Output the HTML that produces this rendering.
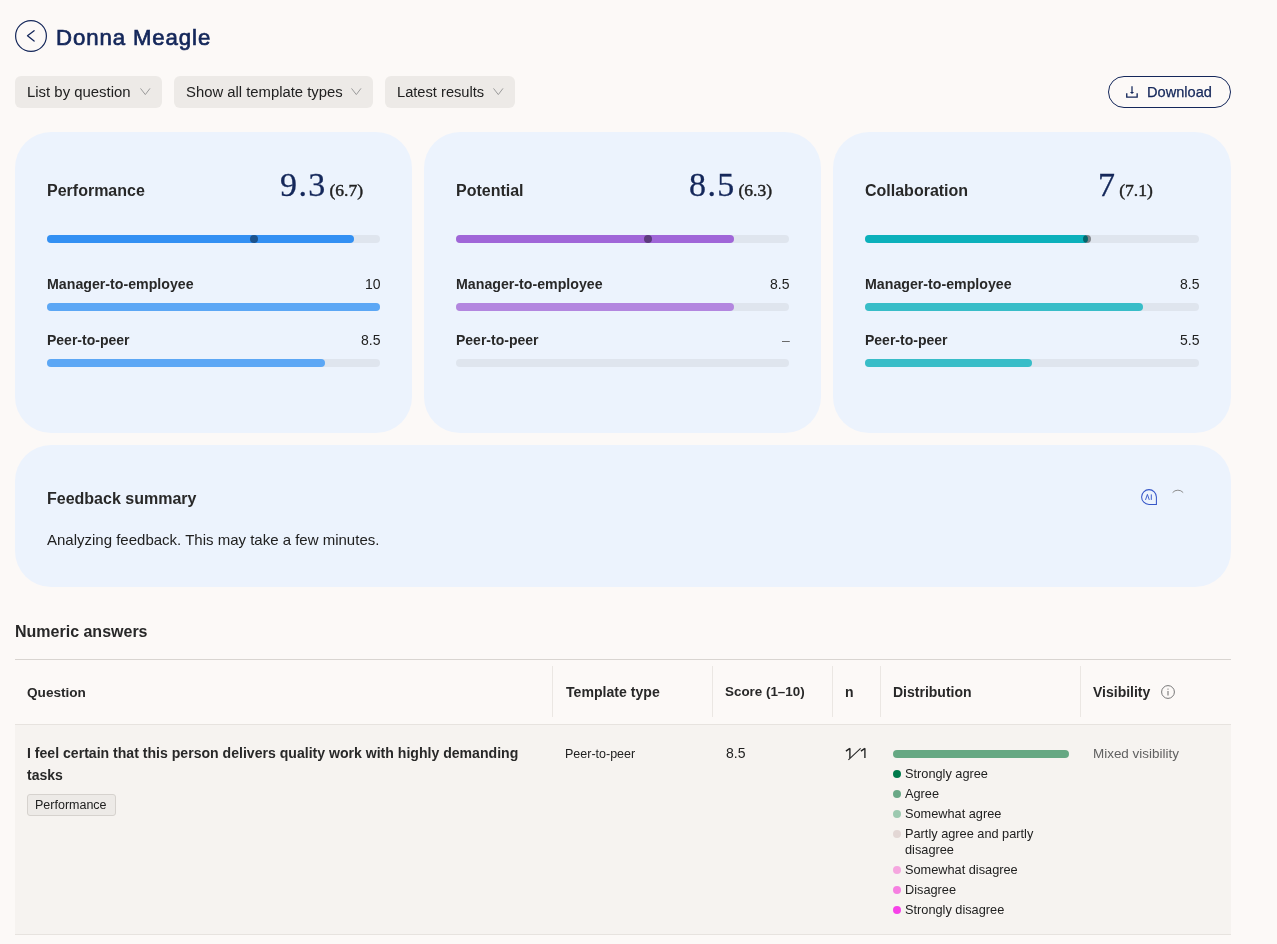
<!DOCTYPE html>
<html><head><meta charset="utf-8"><title>Donna Meagle</title>
<style>
html,body{margin:0;padding:0;}
body{width:1277px;height:944px;background:#fcf9f7;position:relative;overflow:hidden;font-family:'Liberation Sans', sans-serif;}
.t{position:absolute;white-space:nowrap;will-change:transform;}
.r{position:absolute;}
</style></head><body>
<svg class="r" style="left:15px;top:20px" width="32" height="32" viewBox="0 0 32 32"><circle cx="16" cy="16" r="15.4" fill="none" stroke="#14275a" stroke-width="1.2"/><path d="M19.1 10.7 L12.5 15.8 L19.1 21" fill="none" stroke="#14275a" stroke-width="1.3" stroke-linecap="round" stroke-linejoin="round"/></svg>
<div class="t" style="left:55.8px;top:23.83px;font-size:22.2px;line-height:27.75px;font-weight:400;color:#14275a;font-family:'Liberation Sans', sans-serif;-webkit-text-stroke:0.7px #14275a;letter-spacing:0.9px;">Donna Meagle</div>
<div class="r" style="left:15px;top:76px;width:147px;height:32px;background:#edeae7;border-radius:6px;"></div>
<div class="t" style="left:27px;top:83.11px;font-size:14.92px;line-height:18.65px;font-weight:400;color:#212121;font-family:'Liberation Sans', sans-serif;">List by question</div>
<svg class="r" style="left:139.5px;top:88px" width="11" height="8" viewBox="0 0 11 8"><path d="M0.5 0.4 L5.3 6.6 L10 0.4" fill="none" stroke="#9a9a9a" stroke-width="1"/></svg>
<div class="r" style="left:174px;top:76px;width:199px;height:32px;background:#edeae7;border-radius:6px;"></div>
<div class="t" style="left:186px;top:83.18px;font-size:14.84px;line-height:18.55px;font-weight:400;color:#212121;font-family:'Liberation Sans', sans-serif;">Show all template types</div>
<svg class="r" style="left:350.7px;top:88px" width="11" height="8" viewBox="0 0 11 8"><path d="M0.5 0.4 L5.3 6.6 L10 0.4" fill="none" stroke="#9a9a9a" stroke-width="1"/></svg>
<div class="r" style="left:385px;top:76px;width:130px;height:32px;background:#edeae7;border-radius:6px;"></div>
<div class="t" style="left:397px;top:83.36px;font-size:14.66px;line-height:18.32px;font-weight:400;color:#212121;font-family:'Liberation Sans', sans-serif;">Latest results</div>
<svg class="r" style="left:492.5px;top:88px" width="11" height="8" viewBox="0 0 11 8"><path d="M0.5 0.4 L5.3 6.6 L10 0.4" fill="none" stroke="#9a9a9a" stroke-width="1"/></svg>
<div class="r" style="left:1108px;top:76px;width:123px;height:32px;background:transparent;border-radius:16px;box-sizing:border-box;border:1.5px solid #14275a;"></div>
<svg class="r" style="left:1125px;top:86px" width="14" height="13" viewBox="0 0 14 13"><path d="M7 0.2 V6.6" fill="none" stroke="#14275a" stroke-width="1.25"/><path d="M4.9 6.1 H9.1 L7 8.1 Z" fill="#14275a"/><path d="M1.75 7.3 V11.15 H12.15 V7.3" fill="none" stroke="#14275a" stroke-width="1.35"/></svg>
<div class="t" style="left:1147.3px;top:82.82px;font-size:14.6px;line-height:18.25px;font-weight:400;color:#14275a;font-family:'Liberation Sans', sans-serif;-webkit-text-stroke:0.25px #14275a;">Download</div>
<div class="r" style="left:15px;top:132px;width:397.33px;height:301px;background:#ecf3fd;border-radius:36px;"></div>
<div class="t" style="left:47px;top:180.86px;font-size:16px;line-height:20.00px;font-weight:700;color:#282828;font-family:'Liberation Sans', sans-serif;">Performance</div>
<div class="t" style="left:279.60px;top:163.77px;line-height:42.50px;white-space:nowrap"><span style="font-family:'Liberation Serif', serif;font-size:34px;color:#14275a;-webkit-text-stroke:0.3px #14275a;letter-spacing:1.4px">9.3</span><span style="font-family:'Liberation Serif', serif;font-size:17.5px;font-weight:400;-webkit-text-stroke:0.45px #212121;color:#212121;margin-left:2.8px">(6.7)</span></div>
<div class="r" style="left:47px;top:235px;width:333.33px;height:8px;background:#dfe5ee;border-radius:4px;"></div>
<div class="r" style="left:47px;top:235px;width:307.33px;height:8px;background:#3390f3;border-radius:4px;"></div>
<div class="r" style="left:250.0px;top:235px;width:8px;height:8px;background:rgba(0,0,0,0.42);border-radius:4px;"></div>
<div class="t" style="left:47px;top:275.60px;font-size:14.2px;line-height:17.75px;font-weight:700;color:#282828;font-family:'Liberation Sans', sans-serif;">Manager-to-employee</div>
<div class="t" style="right:896.6700000000001px;top:275.80px;font-size:14px;line-height:17.50px;font-weight:400;color:#212121;font-family:'Liberation Sans', sans-serif;">10</div>
<div class="r" style="left:47px;top:303px;width:333.33px;height:8px;background:#dfe5ee;border-radius:4px;"></div>
<div class="r" style="left:47px;top:303px;width:333.33px;height:8px;background:#5ca7f5;border-radius:4px;"></div>
<div class="t" style="left:47px;top:332.30px;font-size:14px;line-height:17.50px;font-weight:700;color:#282828;font-family:'Liberation Sans', sans-serif;">Peer-to-peer</div>
<div class="t" style="right:896.6700000000001px;top:332.30px;font-size:14px;line-height:17.50px;font-weight:400;color:#212121;font-family:'Liberation Sans', sans-serif;">8.5</div>
<div class="r" style="left:47px;top:359px;width:333.33px;height:8px;background:#dfe5ee;border-radius:4px;"></div>
<div class="r" style="left:47px;top:359px;width:277.76px;height:8px;background:#5ca7f5;border-radius:4px;"></div>
<div class="r" style="left:424.33px;top:132px;width:397px;height:301px;background:#ecf3fd;border-radius:36px;"></div>
<div class="t" style="left:456.33px;top:180.86px;font-size:16px;line-height:20.00px;font-weight:700;color:#282828;font-family:'Liberation Sans', sans-serif;">Potential</div>
<div class="t" style="left:688.93px;top:163.77px;line-height:42.50px;white-space:nowrap"><span style="font-family:'Liberation Serif', serif;font-size:34px;color:#14275a;-webkit-text-stroke:0.3px #14275a;letter-spacing:1.4px">8.5</span><span style="font-family:'Liberation Serif', serif;font-size:17.5px;font-weight:400;-webkit-text-stroke:0.45px #212121;color:#212121;margin-left:2.8px">(6.3)</span></div>
<div class="r" style="left:456.33px;top:235px;width:333px;height:8px;background:#dfe5ee;border-radius:4px;"></div>
<div class="r" style="left:456.33px;top:235px;width:277.49px;height:8px;background:#a066d8;border-radius:4px;"></div>
<div class="r" style="left:644.43px;top:235px;width:8px;height:8px;background:rgba(0,0,0,0.42);border-radius:4px;"></div>
<div class="t" style="left:456.33px;top:275.60px;font-size:14.2px;line-height:17.75px;font-weight:700;color:#282828;font-family:'Liberation Sans', sans-serif;">Manager-to-employee</div>
<div class="t" style="right:487.66999999999996px;top:275.80px;font-size:14px;line-height:17.50px;font-weight:400;color:#212121;font-family:'Liberation Sans', sans-serif;">8.5</div>
<div class="r" style="left:456.33px;top:303px;width:333px;height:8px;background:#dfe5ee;border-radius:4px;"></div>
<div class="r" style="left:456.33px;top:303px;width:277.49px;height:8px;background:#b386df;border-radius:4px;"></div>
<div class="t" style="left:456.33px;top:332.30px;font-size:14px;line-height:17.50px;font-weight:700;color:#282828;font-family:'Liberation Sans', sans-serif;">Peer-to-peer</div>
<div class="t" style="right:487.66999999999996px;top:332.30px;font-size:14px;line-height:17.50px;font-weight:400;color:#6a6a6a;font-family:'Liberation Sans', sans-serif;">–</div>
<div class="r" style="left:456.33px;top:359px;width:333px;height:8px;background:#dfe5ee;border-radius:4px;"></div>
<div class="r" style="left:833px;top:132px;width:398px;height:301px;background:#ecf3fd;border-radius:36px;"></div>
<div class="t" style="left:865px;top:180.86px;font-size:16px;line-height:20.00px;font-weight:700;color:#282828;font-family:'Liberation Sans', sans-serif;">Collaboration</div>
<div class="t" style="left:1097.60px;top:163.77px;line-height:42.50px;white-space:nowrap"><span style="font-family:'Liberation Serif', serif;font-size:34px;color:#14275a;-webkit-text-stroke:0.3px #14275a;letter-spacing:1.4px">7</span><span style="font-family:'Liberation Serif', serif;font-size:17.5px;font-weight:400;-webkit-text-stroke:0.45px #212121;color:#212121;margin-left:2.8px">(7.1)</span></div>
<div class="r" style="left:865px;top:235px;width:334px;height:8px;background:#dfe5ee;border-radius:4px;"></div>
<div class="r" style="left:865px;top:235px;width:222.68px;height:8px;background:#0bb0bb;border-radius:4px;"></div>
<div class="r" style="left:1083.39px;top:235px;width:8px;height:8px;background:rgba(0,0,0,0.42);border-radius:4px;"></div>
<div class="t" style="left:865px;top:275.60px;font-size:14.2px;line-height:17.75px;font-weight:700;color:#282828;font-family:'Liberation Sans', sans-serif;">Manager-to-employee</div>
<div class="t" style="right:78px;top:275.80px;font-size:14px;line-height:17.50px;font-weight:400;color:#212121;font-family:'Liberation Sans', sans-serif;">8.5</div>
<div class="r" style="left:865px;top:303px;width:334px;height:8px;background:#dfe5ee;border-radius:4px;"></div>
<div class="r" style="left:865px;top:303px;width:278.32px;height:8px;background:#38bdc8;border-radius:4px;"></div>
<div class="t" style="left:865px;top:332.30px;font-size:14px;line-height:17.50px;font-weight:700;color:#282828;font-family:'Liberation Sans', sans-serif;">Peer-to-peer</div>
<div class="t" style="right:78px;top:332.30px;font-size:14px;line-height:17.50px;font-weight:400;color:#212121;font-family:'Liberation Sans', sans-serif;">5.5</div>
<div class="r" style="left:865px;top:359px;width:334px;height:8px;background:#dfe5ee;border-radius:4px;"></div>
<div class="r" style="left:865px;top:359px;width:167.0px;height:8px;background:#38bdc8;border-radius:4px;"></div>
<div class="r" style="left:15px;top:445px;width:1216px;height:142px;background:#ecf3fd;border-radius:36px;"></div>
<div class="t" style="left:46.6px;top:488.56px;font-size:16px;line-height:20.00px;font-weight:700;color:#282828;font-family:'Liberation Sans', sans-serif;">Feedback summary</div>
<div class="t" style="left:46.5px;top:530.83px;font-size:15px;line-height:18.75px;font-weight:400;color:#212121;font-family:'Liberation Sans', sans-serif;">Analyzing feedback. This may take a few minutes.</div>
<svg class="r" style="left:1141px;top:489px" width="16" height="16" viewBox="0 0 16 16"><path d="M15.4 15.4 H8 A7.4 7.4 0 1 1 15.4 8 Z" fill="none" stroke="#3656c8" stroke-width="1.05"/><path d="M4.5 10.9 L6.4 5.4 L8.3 10.9 M10.3 5.4 V10.9" fill="none" stroke="#3656c8" stroke-width="0.95"/></svg>
<svg class="r" style="left:1170px;top:488px" width="16" height="16" viewBox="0 0 16 16"><path d="M2.6 4.6 A7 7 0 0 1 13.2 4.6" fill="none" stroke="#8d8d8d" stroke-width="1"/></svg>
<div class="t" style="left:15.2px;top:621.86px;font-size:16px;line-height:20.00px;font-weight:700;color:#282828;font-family:'Liberation Sans', sans-serif;">Numeric answers</div>
<div class="r" style="left:15px;top:659px;width:1216px;height:1px;background:#d9d5d1;border-radius:0px;"></div>
<div class="r" style="left:15px;top:724px;width:1216px;height:210px;background:#f6f3f0;border-radius:0px;"></div>
<div class="r" style="left:15px;top:723.5px;width:1216px;height:1px;background:#e7e3df;border-radius:0px;"></div>
<div class="r" style="left:15px;top:934px;width:1216px;height:1px;background:#e7e3df;border-radius:0px;"></div>
<div class="r" style="left:552px;top:666px;width:1px;height:51px;background:#ebe7e3;border-radius:0px;"></div>
<div class="r" style="left:712px;top:666px;width:1px;height:51px;background:#ebe7e3;border-radius:0px;"></div>
<div class="r" style="left:832px;top:666px;width:1px;height:51px;background:#ebe7e3;border-radius:0px;"></div>
<div class="r" style="left:880px;top:666px;width:1px;height:51px;background:#ebe7e3;border-radius:0px;"></div>
<div class="r" style="left:1080px;top:666px;width:1px;height:51px;background:#ebe7e3;border-radius:0px;"></div>
<div class="t" style="left:26.6px;top:684.29px;font-size:13.6px;line-height:17.00px;font-weight:700;color:#282828;font-family:'Liberation Sans', sans-serif;">Question</div>
<div class="t" style="left:566px;top:683.80px;font-size:14.1px;line-height:17.62px;font-weight:700;color:#282828;font-family:'Liberation Sans', sans-serif;">Template type</div>
<div class="t" style="left:724.6px;top:684.48px;font-size:13.4px;line-height:16.75px;font-weight:700;color:#282828;font-family:'Liberation Sans', sans-serif;">Score (1–10)</div>
<div class="t" style="left:845.4px;top:683.90px;font-size:14px;line-height:17.50px;font-weight:700;color:#282828;font-family:'Liberation Sans', sans-serif;">n</div>
<div class="t" style="left:893.3px;top:683.90px;font-size:14px;line-height:17.50px;font-weight:700;color:#282828;font-family:'Liberation Sans', sans-serif;">Distribution</div>
<div class="t" style="left:1093.3px;top:683.90px;font-size:14px;line-height:17.50px;font-weight:700;color:#282828;font-family:'Liberation Sans', sans-serif;">Visibility</div>
<svg class="r" style="left:1161px;top:685px" width="14" height="14" viewBox="0 0 14 14"><circle cx="7" cy="7" r="6.4" fill="none" stroke="#777" stroke-width="1"/><path d="M7 6 V10.5" stroke="#777" stroke-width="1.1"/><circle cx="7" cy="4.1" r="0.7" fill="#777"/></svg>
<div class="t" style="left:26.5px;top:744.72px;font-size:14.08px;line-height:17.60px;font-weight:700;color:#282828;font-family:'Liberation Sans', sans-serif;">I feel certain that this person delivers quality work with highly demanding</div>
<div class="t" style="left:26.5px;top:766.80px;font-size:14px;line-height:17.50px;font-weight:700;color:#282828;font-family:'Liberation Sans', sans-serif;">tasks</div>
<div class="r" style="left:27px;top:794px;width:89px;height:22px;background:#edeae7;border-radius:3px;box-sizing:border-box;border:1px solid #d6d2ce;"></div>
<div class="t" style="left:35.3px;top:798.26px;font-size:12.5px;line-height:15.62px;font-weight:400;color:#212121;font-family:'Liberation Sans', sans-serif;">Performance</div>
<div class="t" style="left:565px;top:747.06px;font-size:12.5px;line-height:15.62px;font-weight:400;color:#212121;font-family:'Liberation Sans', sans-serif;">Peer-to-peer</div>
<div class="t" style="left:725.5px;top:744.80px;font-size:14px;line-height:17.50px;font-weight:400;color:#212121;font-family:'Liberation Sans', sans-serif;">8.5</div>
<svg class="r" style="left:840px;top:744px" width="30" height="20" viewBox="0 0 30 20"><path d="M9.9 4.2 V14 M9.9 4.4 L5.9 7.1 M24.9 4.2 V14 M24.9 4.4 L20.9 7.1" fill="none" stroke="#212121" stroke-width="1.35"/><path d="M8.4 15.8 L20.6 4.3" stroke="#212121" stroke-width="1.05"/></svg>
<div class="r" style="left:893px;top:750px;width:176px;height:8px;background:#66a883;border-radius:4px;"></div>
<div class="r" style="left:893px;top:770px;width:8px;height:8px;background:#007a4b;border-radius:4px;"></div>
<div class="t" style="left:904.9px;top:766px;font-size:12.75px;line-height:16px;color:#212121;font-family:'Liberation Sans', sans-serif">Strongly agree</div>
<div class="r" style="left:893px;top:790px;width:8px;height:8px;background:#6aa886;border-radius:4px;"></div>
<div class="t" style="left:904.9px;top:786px;font-size:12.75px;line-height:16px;color:#212121;font-family:'Liberation Sans', sans-serif">Agree</div>
<div class="r" style="left:893px;top:810px;width:8px;height:8px;background:#9dc9b0;border-radius:4px;"></div>
<div class="t" style="left:904.9px;top:806px;font-size:12.75px;line-height:16px;color:#212121;font-family:'Liberation Sans', sans-serif">Somewhat agree</div>
<div class="r" style="left:893px;top:830px;width:8px;height:8px;background:#e3d7d5;border-radius:4px;"></div>
<div class="t" style="left:904.9px;top:826px;font-size:12.75px;line-height:16px;color:#212121;font-family:'Liberation Sans', sans-serif">Partly agree and partly<br>disagree</div>
<div class="r" style="left:893px;top:866px;width:8px;height:8px;background:#f5a6df;border-radius:4px;"></div>
<div class="t" style="left:904.9px;top:862px;font-size:12.75px;line-height:16px;color:#212121;font-family:'Liberation Sans', sans-serif">Somewhat disagree</div>
<div class="r" style="left:893px;top:886px;width:8px;height:8px;background:#f67fe1;border-radius:4px;"></div>
<div class="t" style="left:904.9px;top:882px;font-size:12.75px;line-height:16px;color:#212121;font-family:'Liberation Sans', sans-serif">Disagree</div>
<div class="r" style="left:893px;top:906px;width:8px;height:8px;background:#f742e8;border-radius:4px;"></div>
<div class="t" style="left:904.9px;top:902px;font-size:12.75px;line-height:16px;color:#212121;font-family:'Liberation Sans', sans-serif">Strongly disagree</div>
<div class="t" style="left:1092.5px;top:745.73px;font-size:13.45px;line-height:16.81px;font-weight:400;color:#616161;font-family:'Liberation Sans', sans-serif;">Mixed visibility</div>
</body></html>
